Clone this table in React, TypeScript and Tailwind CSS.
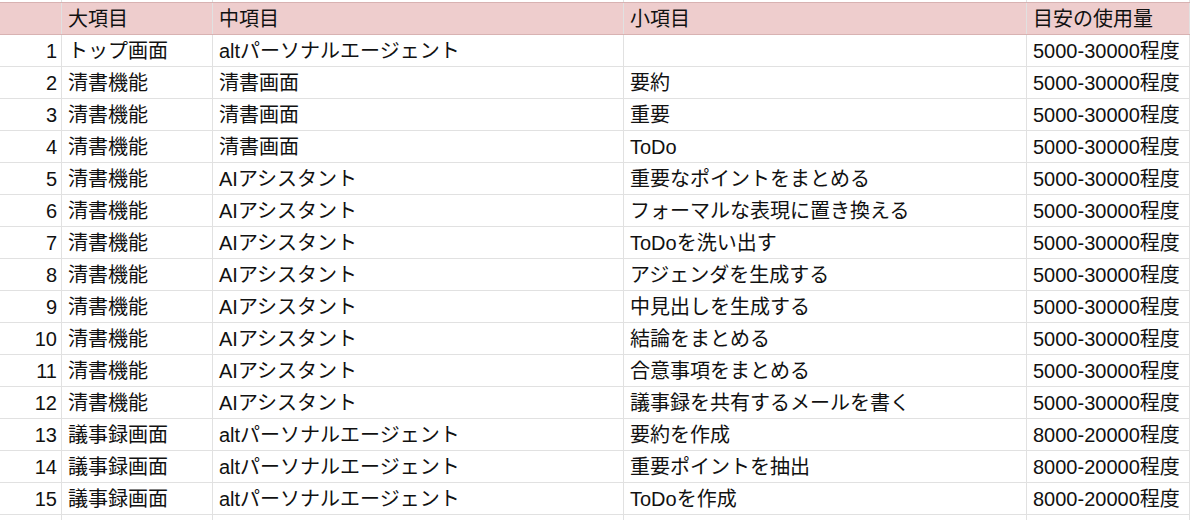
const rows: [string, string, string, string][] = [
  ["トップ画面", "altパーソナルエージェント", "", "5000-30000程度"],
  ["清書機能", "清書画面", "要約", "5000-30000程度"],
  ["清書機能", "清書画面", "重要", "5000-30000程度"],
  ["清書機能", "清書画面", "ToDo", "5000-30000程度"],
  ["清書機能", "AIアシスタント", "重要なポイントをまとめる", "5000-30000程度"],
  ["清書機能", "AIアシスタント", "フォーマルな表現に置き換える", "5000-30000程度"],
  ["清書機能", "AIアシスタント", "ToDoを洗い出す", "5000-30000程度"],
  ["清書機能", "AIアシスタント", "アジェンダを生成する", "5000-30000程度"],
  ["清書機能", "AIアシスタント", "中見出しを生成する", "5000-30000程度"],
  ["清書機能", "AIアシスタント", "結論をまとめる", "5000-30000程度"],
  ["清書機能", "AIアシスタント", "合意事項をまとめる", "5000-30000程度"],
  ["清書機能", "AIアシスタント", "議事録を共有するメールを書く", "5000-30000程度"],
  ["議事録画面", "altパーソナルエージェント", "要約を作成", "8000-20000程度"],
  ["議事録画面", "altパーソナルエージェント", "重要ポイントを抽出", "8000-20000程度"],
  ["議事録画面", "altパーソナルエージェント", "ToDoを作成", "8000-20000程度"],
];

const cols = "grid grid-cols-[62px_151px_411px_403px_163px]";

function Cell({ children, className = "" }: { children?: React.ReactNode; className?: string }) {
  return (
    <div className={`flex items-center border-r border-[#e1e1e1] px-[6px] whitespace-nowrap overflow-hidden ${className}`}>
      {children}
    </div>
  );
}

export default function App() {
  return (
    <div
      className="w-[1190px] h-[520px] overflow-hidden bg-white text-[20px] text-[#111]"
      style={{ fontFamily: '"Liberation Sans", "Noto Sans CJK JP", sans-serif' }}
    >
      {/* sliver of the row above */}
      <div className={`${cols} h-[2px]`}>
        <Cell />
        <Cell />
        <Cell />
        <Cell />
        <Cell />
      </div>

      {/* header */}
      <div className={`${cols} h-[33px] bg-[#eecdcd] border-y border-[#d8b2b2]`}>
        <Cell className="border-[#d8b2b2]" />
        <Cell className="border-[#d8b2b2]">大項目</Cell>
        <Cell className="border-[#d8b2b2]">中項目</Cell>
        <Cell className="border-[#d8b2b2]">小項目</Cell>
        <Cell className="border-[#d8b2b2]">目安の使用量</Cell>
      </div>

      {rows.map((r, i) => (
        <div key={i} className={`${cols} h-[32px] border-b border-[#e1e1e1]`}>
          <Cell className="justify-end pr-[4px]">{i + 1}</Cell>
          <Cell>{r[0]}</Cell>
          <Cell>{r[1]}</Cell>
          <Cell>{r[2]}</Cell>
          <Cell>{r[3]}</Cell>
        </div>
      ))}

      <div className={`${cols} h-[32px]`}>
        <Cell />
        <Cell />
        <Cell />
        <Cell />
        <Cell />
      </div>
    </div>
  );
}
